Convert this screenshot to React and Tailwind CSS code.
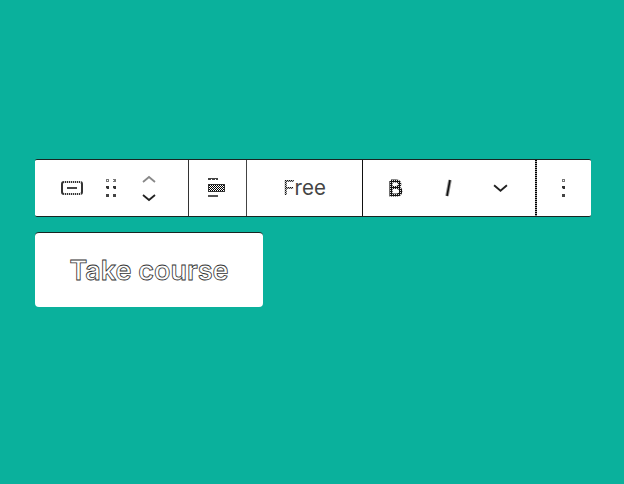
const Dots = ({ columns }) => (
  <svg width={columns === 2 ? 12 : 5} height="20" viewBox={columns === 2 ? "0 0 12 20" : "0 0 5 20"} shapeRendering="crispEdges">
    {Array.from({ length: columns }, (_, c) =>
      [1, 8, 16].map((y, r) => (
        <g key={`${c}-${y}`}>
          <rect x={1 + c * 7} y={y} width="3" height="3" fill={r === 0 ? "#777" : r === 1 ? "#333" : "#444"} />
          {r === 0 && <rect x={2 + c * 7 - (columns === 2 && c === 1 ? 1 : 0)} y={y + 1} width="1" height="1" fill="#fff" />}
          {r === 1 && <rect x={1 + c * 7} y={y + 2} width="1" height="1" fill="#bbb" />}
        </g>
      ))
    )}
  </svg>
);

const ButtonIcon = () => (
  <svg width="24" height="16" viewBox="0 0 24 16" fill="none">
    <rect x="2" y="2" width="20" height="12" rx="2" stroke="#333" strokeWidth="2" />
    <path d="M4 2H21M4 14H21" stroke="#fff" strokeWidth="1.4" strokeDasharray="1 1" />
    <path d="M7 8H17" stroke="#444" strokeWidth="2" />
  </svg>
);

const Chevron = ({ up, color, width = 14, height = 8 }) => (
  <svg width={width} height={height} viewBox="0 0 14 8" fill="none" className="block">
    <path d={up ? "M1 7L7 2L13 7" : "M1 1L7 6L13 1"} stroke={color} strokeWidth="1.8" />
  </svg>
);

const AlignIcon = () => (
  <svg width="18" height="20" viewBox="0 0 18 20" shapeRendering="crispEdges">
    <defs>
      <pattern id="check" width="2" height="2" patternUnits="userSpaceOnUse">
        <rect width="2" height="2" fill="#fff" />
        <rect width="1" height="1" fill="#000" />
        <rect x="1" y="1" width="1" height="1" fill="#000" />
      </pattern>
    </defs>
    <rect x="0" y="0" width="10" height="2" fill="#444" />
    <rect x="3" y="1" width="1" height="1" fill="#fff" />
    <rect x="7" y="1" width="1" height="1" fill="#fff" />
    <rect x="0" y="6" width="17" height="8" fill="#333" />
    <rect x="1" y="7" width="15" height="6" fill="url(#check)" />
    <rect x="0" y="17" width="10" height="2" fill="#555" />
  </svg>
);

export default function App() {
  return (
    <main className="h-[484px] w-[624px] overflow-hidden bg-[#0ab19c] pt-[159px] pl-[35px] font-['Inter','Liberation_Sans',sans-serif]">
      <div className="flex h-[58px] w-[556px] rounded-[2px] border-t border-b border-[#182522] bg-white">
        <div className="flex w-[154px] shrink-0 items-center border-r border-[#333] pl-[25px]">
          <ButtonIcon />
          <div className="ml-[21px]"><Dots columns={2} /></div>
          <div className="ml-[25px] flex flex-col gap-[11px]">
            <Chevron up color="#888" />
            <Chevron color="#222" />
          </div>
        </div>
        <div className="flex w-[58px] shrink-0 items-center border-r border-[#444] pl-[19px]">
          <AlignIcon />
        </div>
        <div className="flex w-[116px] shrink-0 items-center justify-center border-r border-[#111] pt-px text-[20.5px] leading-none font-normal text-[#444]">
          <span>
            <span className="bg-[repeating-conic-gradient(#111_0_25%,#bbb_0_50%)] bg-[length:2px_2px] bg-clip-text text-transparent">F</span>ree
          </span>
        </div>
        <div className="flex w-[172px] shrink-0 items-center pl-[25px]">
          <svg width="16" height="20" viewBox="0 0 16 20">
            <defs>
              <pattern id="ink" width="2" height="2" patternUnits="userSpaceOnUse">
                <rect width="2" height="2" fill="#111" />
                <rect width="1" height="1" fill="#ddd" />
              </pattern>
            </defs>
            <path d="M3 3H8C13 3 13 9.5 8 9.5H3V3M3 9.5H9C14 9.5 14 17 9 17H3V9.5" fill="none" stroke="url(#ink)" strokeWidth="3.2" />
          </svg>
          <svg className="ml-[39px]" width="10" height="20" viewBox="0 0 10 20">
            <path d="M7 2L4 18" stroke="#999" strokeWidth="3.6" />
            <path d="M7 2L4 18" stroke="#111" strokeWidth="1.5" />
          </svg>
          <div className="ml-[40px]"><Chevron color="#222" width={15} height={9} /></div>
        </div>
        <div className="flex w-[56px] shrink-0 items-center">
          <svg width="2" height="56" viewBox="0 0 2 56" className="shrink-0">
            <rect width="2" height="56" fill="#999" />
            <path d="M1 0V56" stroke="#000" strokeWidth="2" strokeDasharray="1 1" />
          </svg>
          <div className="ml-[24px]"><Dots columns={1} /></div>
        </div>
      </div>
      <button className="mt-[15px] flex h-[75px] w-[228px] items-center justify-center rounded-[4px] border-t border-[#182522] bg-white pt-px text-[27px] leading-none font-semibold text-white [-webkit-text-stroke:0.8px_#333]">
        Take course
      </button>
    </main>
  );
}
